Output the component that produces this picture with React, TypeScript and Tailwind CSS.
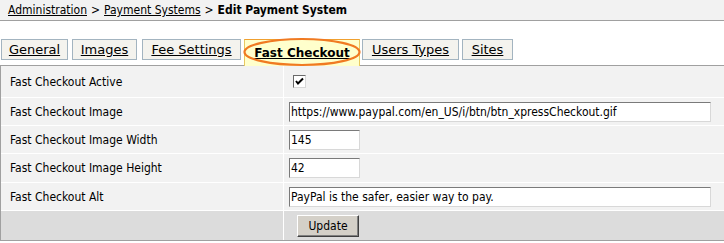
import React from "react";

const font = { fontFamily: '"DejaVu Sans", Verdana, sans-serif' };
const cond = { fontFamily: '"DejaVu Sans Condensed", "Liberation Sans", sans-serif' };

function Tab({ label, w, active }: { label: string; w: number; active?: boolean }) {
  if (active) {
    return (
      <div className="relative z-10" style={{ width: w }}>
        <div className="h-[27px] bg-[#ffffcc] border border-[#e8c860] border-t-[#f0a030] border-b-0 flex items-start justify-center pt-[4px] text-[12px] font-bold underline text-black">
          {label}
        </div>
        <svg className="absolute left-[-1px] top-[-2px]" width={w + 2} height={31} viewBox={`0 0 ${w + 2} 31`}>
          <ellipse cx={(w + 2) / 2} cy={15} rx={(w + 2) / 2 - 1.5} ry={13} fill="none" stroke="#f07a22" strokeWidth={2.2} />
        </svg>
      </div>
    );
  }
  return (
    <div
      className="h-[21px] bg-[#f4f3ee] border border-[#a3b4c0] flex items-center justify-center text-[13px] underline text-black"
      style={{ width: w }}
    >
      {label}
    </div>
  );
}

function Row({ label, children, h }: { label: string; children: React.ReactNode; h: number }) {
  return (
    <>
      <div className="bg-[#f2f2f2] flex items-center pl-[9px] text-[12px] text-black" style={{ height: h, ...cond }}>
        {label}
      </div>
      <div className="bg-[#f2f2f2] flex items-center pl-[5px]" style={{ height: h }}>
        {children}
      </div>
    </>
  );
}

function Input({ value, w }: { value: string; w: number }) {
  return (
    <div
      className="h-[20px] bg-white border border-t-[#7a7a7a] border-l-[#7a7a7a] border-r-[#d8d8d8] border-b-[#d8d8d8] flex items-center pl-[1px] text-[12px] text-black"
      style={{ width: w, ...cond }}
    >
      {value}
    </div>
  );
}

export default function App() {
  return (
    <div className="w-[724px] h-[243px] bg-white overflow-hidden" style={font}>
      <div
        className="h-[21px] bg-[#f2f2f2] border-b border-[#a0a0a0] flex items-center pl-[8px] text-[12px] text-black"
        style={cond}
      >
        <span className="underline">Administration</span>
        <span className="mx-[4px]">&gt;</span>
        <span className="underline">Payment Systems</span>
        <span className="mx-[4px]">&gt;</span>
        <span className="font-bold">Edit Payment System</span>
      </div>
      <div className="flex items-start pl-[1px] mt-[18px] h-[26px]">
        <Tab label="General" w={67} />
        <div className="w-[4px]" />
        <Tab label="Images" w={65} />
        <div className="w-[5px]" />
        <Tab label="Fee Settings" w={99} />
        <div className="w-[3px]" />
        <Tab label="Fast Checkout" w={116} active />
        <div className="w-[2px]" />
        <Tab label="Users Types" w={97} />
        <div className="w-[3px]" />
        <Tab label="Sites" w={51} />
      </div>
      <div className="border-t border-l border-b border-[#a0a0a0] bg-white grid grid-cols-[282px_1fr] gap-px">
        <Row label="Fast Checkout Active" h={31}>
          <div className="ml-[4px] w-[13px] h-[13px] bg-white border border-t-[#6a6a6a] border-l-[#6a6a6a] border-r-[#d8d8d8] border-b-[#d8d8d8] flex items-center justify-center">
            <svg width="9" height="9" viewBox="0 0 9 9">
              <path d="M1 4 L3 6.5 L8 1.5" fill="none" stroke="#000" strokeWidth="2" />
            </svg>
          </div>
        </Row>
        <Row label="Fast Checkout Image" h={27}>
          <Input value="https://www.paypal.com/en_US/i/btn/btn_xpressCheckout.gif" w={422} />
        </Row>
        <Row label="Fast Checkout Image Width" h={27}>
          <Input value="145" w={71} />
        </Row>
        <Row label="Fast Checkout Image Height" h={28}>
          <Input value="42" w={71} />
        </Row>
        <Row label="Fast Checkout Alt" h={27}>
          <Input value="PayPal is the safer, easier way to pay." w={422} />
        </Row>
        <div className="bg-[#dcdcdc] h-[29px]" />
        <div className="bg-[#dcdcdc] h-[29px] flex items-center pl-[13px]">
          <div
            className="w-[62px] h-[22px] bg-[#d4d0c8] border border-t-white border-l-white border-r-[#404040] border-b-[#404040] flex items-center justify-center text-[12px] text-black shadow-[inset_-1px_-1px_0_#808080]"
            style={cond}
          >
            Update
          </div>
        </div>
      </div>
    </div>
  );
}
